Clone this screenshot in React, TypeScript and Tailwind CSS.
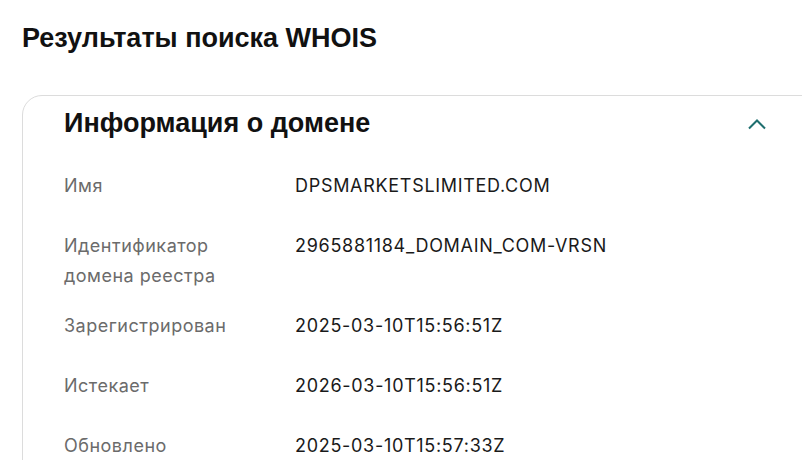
const rows: { label: string[]; value: string }[] = [
  { label: ["Имя"], value: "DPSMARKETSLIMITED.COM" },
  { label: ["Идентификатор", "домена реестра"], value: "2965881184_DOMAIN_COM-VRSN" },
  { label: ["Зарегистрирован"], value: "2025-03-10T15:56:51Z" },
  { label: ["Истекает"], value: "2026-03-10T15:56:51Z" },
  { label: ["Обновлено"], value: "2025-03-10T15:57:33Z" },
];

export default function App() {
  return (
    <div className="w-[802px] h-[460px] overflow-hidden bg-white font-['Liberation_Sans',Arial,sans-serif]">
      <h1 className="pl-[22px] pt-[22px] text-[27px] leading-[32px] font-bold text-[#111]">
        Результаты поиска WHOIS
      </h1>
      <div className="ml-[22px] mt-[41px] w-[820px] border border-[#dcdcdc] rounded-[20px] pl-[41px] pr-[76px] pt-[9px] pb-[40px]">
        <div className="flex items-center justify-between h-[36px]">
          <h2 className="text-[27px] leading-[32px] font-bold text-[#111]">Информация о домене</h2>
          <svg width="20" height="12" viewBox="0 0 20 12" className="mr-[-2px] mt-[2px]">
            <path d="M2 10.5 L10 2.5 L18 10.5" fill="none" stroke="#1f6f6f" strokeWidth="2" />
          </svg>
        </div>
        <div className="mt-[30px] flex flex-col gap-[30px] font-['Inter',sans-serif] text-[18px] leading-[30px]">
          {rows.map((r, i) => (
            <div key={r.value} className={`flex ${i === 1 ? "mb-[-10px]" : ""}`}>
              <div className="w-[231px] text-[#6b6b6b] tracking-[0.5px]">
                {r.label.map((l) => (
                  <div key={l}>{l}</div>
                ))}
              </div>
              <div className="text-[#1a1a1a] tracking-[0.7px]">{r.value}</div>
            </div>
          ))}
        </div>
      </div>
    </div>
  );
}
